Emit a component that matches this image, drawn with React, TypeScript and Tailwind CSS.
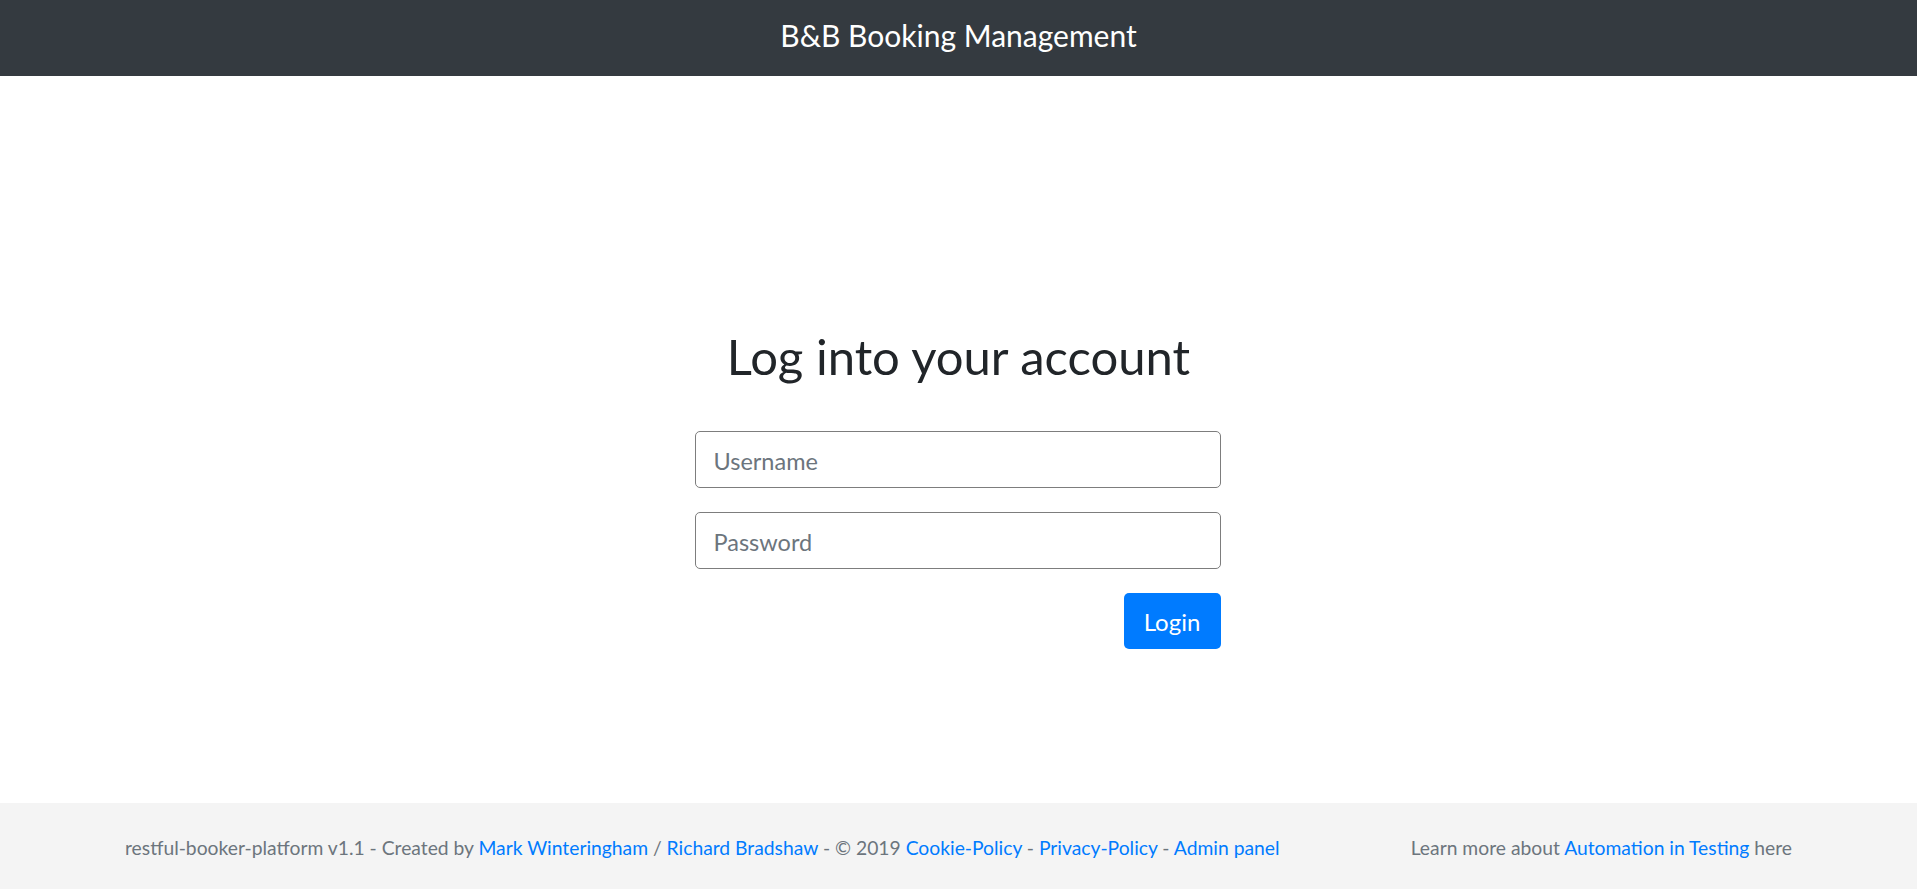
import React from "react";

export default function App() {
  const font = { fontFamily: "Lato, 'Open Sans', sans-serif" };
  return (
    <div className="min-h-screen flex flex-col bg-white" style={font}>
      <header className="h-[76px] bg-[#343a40] flex items-center justify-center pb-[7px]">
        <span className="text-white text-[30px] leading-[1.2]">B&amp;B Booking Management</span>
      </header>

      <main className="flex flex-col items-center pt-[251px]">
        <h1 className="h-[58px] leading-[58px] text-[49px] text-[#212529] font-normal">Log into your account</h1>
        <form className="w-[526px] mt-[46px] flex flex-col gap-[24px] -translate-x-[1px]" onSubmit={(e) => e.preventDefault()}>
          <input
            className="h-[57px] w-full rounded-[5px] border border-[#7d7d7d] px-[18px] pt-[3px] text-[23.5px] text-[#495057] placeholder:text-[#6c757d] outline-none"
            placeholder="Username"
          />
          <input
            type="password"
            className="h-[57px] w-full rounded-[5px] border border-[#7d7d7d] px-[18px] pt-[3px] text-[23.5px] text-[#495057] placeholder:text-[#6c757d] outline-none"
            placeholder="Password"
          />
          <div className="flex justify-end">
            <button className="h-[56px] w-[97px] rounded-[5px] bg-[#007bff] text-white text-[24px] pt-[2px]">Login</button>
          </div>
        </form>
      </main>

      <footer className="mt-auto h-[86px] bg-[#f4f4f4] flex items-center justify-between px-[125px] pt-[4px] text-[19.3px] text-[#6c757d]">
        <p>
          restful-booker-platform v1.1 - Created by <a className="text-[#007bff]" href="#">Mark Winteringham</a> /{" "}
          <a className="text-[#007bff]" href="#">Richard Bradshaw</a> - © 2019{" "}
          <a className="text-[#007bff]" href="#">Cookie-Policy</a> -{" "}
          <a className="text-[#007bff]" href="#">Privacy-Policy</a> -{" "}
          <a className="text-[#007bff]" href="#">Admin panel</a>
        </p>
        <p>
          Learn more about <a className="text-[#007bff]" href="#">Automation in Testing</a> here
        </p>
      </footer>
    </div>
  );
}
